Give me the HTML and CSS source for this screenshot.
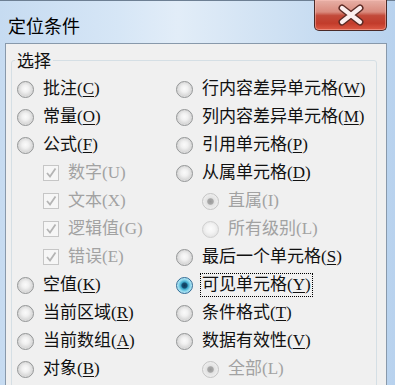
FILE: index.html
```html
<!DOCTYPE html>
<html lang="zh-CN">
<head>
<meta charset="utf-8">
<link rel="stylesheet" href="styles.css">
</head>
<body>
<div class="win">
  <div class="titlebar">
    <span class="title">定位条件</span>
    <div class="close">
      <svg width="28" height="22" viewBox="0 0 28 22">
        <path d="M5 4 L23 18 M23 4 L5 18" stroke="#5b2a24" stroke-width="7" stroke-linecap="round"/>
        <path d="M5 4 L23 18 M23 4 L5 18" stroke="#fbeeee" stroke-width="4.2" stroke-linecap="round"/>
      </svg>
    </div>
  </div>
  <div class="client">
    <fieldset class="group">
      <legend>选择</legend>
      <div class="cols">
        <div class="col">
          <div class="row"><span class="radio"></span><span>批注(<u>C</u>)</span></div>
          <div class="row"><span class="radio"></span><span>常量(<u>O</u>)</span></div>
          <div class="row"><span class="radio"></span><span>公式(<u>F</u>)</span></div>
          <div class="row sub dis"><span class="check"><svg width="14" height="14" viewBox="0 0 14 14"><path d="M3 7 L6 10.5 L11.5 2.5" fill="none" stroke="#b4b4b4" stroke-width="1.8"/></svg></span><span>数字(U)</span></div>
          <div class="row sub dis"><span class="check"><svg width="14" height="14" viewBox="0 0 14 14"><path d="M3 7 L6 10.5 L11.5 2.5" fill="none" stroke="#b4b4b4" stroke-width="1.8"/></svg></span><span>文本(X)</span></div>
          <div class="row sub dis"><span class="check"><svg width="14" height="14" viewBox="0 0 14 14"><path d="M3 7 L6 10.5 L11.5 2.5" fill="none" stroke="#b4b4b4" stroke-width="1.8"/></svg></span><span>逻辑值(G)</span></div>
          <div class="row sub dis"><span class="check"><svg width="14" height="14" viewBox="0 0 14 14"><path d="M3 7 L6 10.5 L11.5 2.5" fill="none" stroke="#b4b4b4" stroke-width="1.8"/></svg></span><span>错误(E)</span></div>
          <div class="row"><span class="radio"></span><span>空值(<u>K</u>)</span></div>
          <div class="row"><span class="radio"></span><span>当前区域(<u>R</u>)</span></div>
          <div class="row"><span class="radio"></span><span>当前数组(<u>A</u>)</span></div>
          <div class="row"><span class="radio"></span><span>对象(<u>B</u>)</span></div>
        </div>
        <div class="col">
          <div class="row"><span class="radio"></span><span>行内容差异单元格(<u>W</u>)</span></div>
          <div class="row"><span class="radio"></span><span>列内容差异单元格(<u>M</u>)</span></div>
          <div class="row"><span class="radio"></span><span>引用单元格(<u>P</u>)</span></div>
          <div class="row"><span class="radio"></span><span>从属单元格(<u>D</u>)</span></div>
          <div class="row sub dis"><span class="radio dis-on"></span><span>直属(I)</span></div>
          <div class="row sub dis"><span class="radio dis-off"></span><span>所有级别(L)</span></div>
          <div class="row"><span class="radio"></span><span>最后一个单元格(<u>S</u>)</span></div>
          <div class="row"><span class="radio on"></span><span class="focus">可见单元格(<u>Y</u>)</span></div>
          <div class="row"><span class="radio"></span><span>条件格式(<u>T</u>)</span></div>
          <div class="row"><span class="radio"></span><span>数据有效性(<u>V</u>)</span></div>
          <div class="row sub dis"><span class="radio dis-on"></span><span>全部(L)</span></div>
        </div>
      </div>
    </fieldset>
  </div>
</div>
</body>
</html>
```

FILE: styles.css
```css
* { box-sizing: border-box; }
html, body {
  margin: 0;
  padding: 0;
  overflow: hidden;
}
body {
  width: 395px;
  height: 385px;
  background: linear-gradient(to right, #c6dbf1 0%, #d6e6f6 30%, #e2edf8 45%, #cfe1f3 70%, #b8d2ee 100%);
  font-family: "Liberation Serif", "Noto Sans CJK SC", serif;
  color: #111;
}
.win {
  display: flex;
  flex-direction: column;
  height: 385px;
}
.titlebar {
  height: 43px;
  flex: none;
  display: flex;
  justify-content: space-between;
  align-items: flex-start;
  padding: 0 8px 0 8px;
  border-top: 1px solid #6d7f93;
}
.title {
  font-family: "Noto Sans CJK SC", sans-serif;
  font-size: 18px;
  line-height: 24px;
  margin-top: 12px;
  color: #000;
}
.close {
  width: 73px;
  height: 31px;
  margin-top: -1px;
  border: 1px solid #4a2a28;
  border-top: none;
  border-radius: 0 0 5px 5px;
  background: linear-gradient(#e7b0a6 0%, #d98a7d 40%, #c24a3a 52%, #c23c2b 78%, #de5a45 100%);
  box-shadow: inset 0 0 0 1px rgba(255, 200, 190, 0.45);
  display: flex;
  align-items: center;
  justify-content: center;
}
.client {
  flex: 1;
  min-height: 0;
  overflow: hidden;
  margin: 0 8px 0 5px;
  background: #f0f0f0;
  border: 1px solid #8899ab;
  border-bottom: none;
}
.group {
  margin: 6px 9px 0 5px;
  padding: 5px 0 0 5px;
  border: 1px solid #d5dfe5;
  border-radius: 3px;
  height: 400px;
}
.group legend {
  font-size: 17px;
  line-height: 20px;
  padding: 0 2px;
  margin-left: -2px;
  font-family: "Noto Sans CJK SC", sans-serif;
  color: #111;
}
.cols {
  display: flex;
}
.col {
  display: flex;
  flex-direction: column;
}
.col:first-child {
  width: 159px;
}
.row {
  height: 28px;
  display: flex;
  align-items: center;
  gap: 9px;
  font-size: 17px;
  line-height: 22px;
  white-space: nowrap;
}
.row.sub {
  padding-left: 26px;
}
.row.dis {
  color: #a2a2a2;
}
u {
  text-decoration-thickness: 1px;
  text-underline-offset: 2px;
}
.radio {
  flex: none;
  width: 17px;
  height: 17px;
  border-radius: 50%;
  border: 1px solid #939596;
  background: radial-gradient(circle at 50% 45%, #fafafa 0%, #f1f1f1 30%, #d9d9d9 62%, #e9e9e9 85%, #f6f6f6 100%);
}
.radio.on {
  border-color: #2d6a95;
  background: radial-gradient(circle at 50% 50%, #0d3a57 0%, #164e73 24%, #3aa6c8 34%, #8ad6ec 55%, #c4ecf7 75%, #e2f5fb 100%);
}
.radio.dis-on {
  border-color: #c4c4c4;
  background: radial-gradient(circle at 50% 50%, #9a9a9a 0%, #a8a8a8 26%, #e2e2e2 36%, #eeeeee 70%, #f6f6f6 100%);
}
.radio.dis-off {
  border-color: #cfcfcf;
  background: radial-gradient(circle at 50% 45%, #fbfbfb 0%, #f3f3f3 40%, #e6e6e6 70%, #f3f3f3 100%);
}
.check {
  flex: none;
  width: 16px;
  height: 16px;
  border: 1px solid #c6c6c6;
  background: #f6f6f6;
  display: flex;
  align-items: center;
  justify-content: center;
}
.focus {
  outline: 1px dotted #000;
  outline-offset: 0;
  padding: 0 1px;
  margin-left: -1px;
}
```
